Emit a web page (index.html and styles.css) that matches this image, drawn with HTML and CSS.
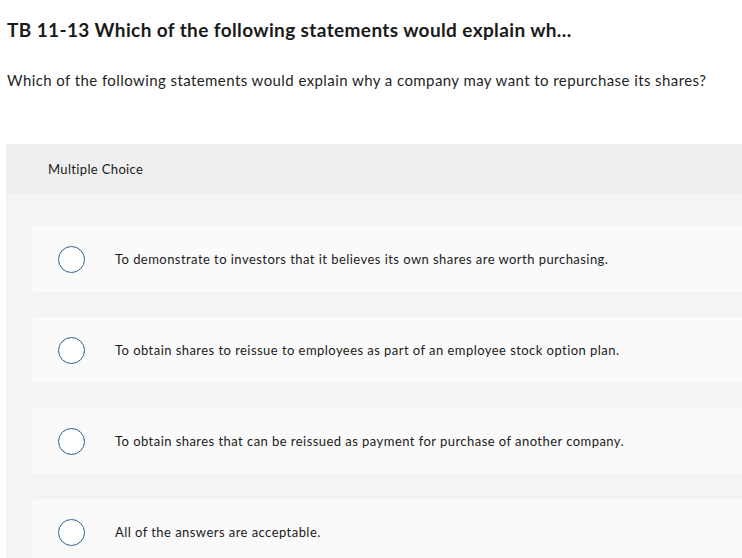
FILE: index.html
```html
<!DOCTYPE html>
<html>
<head>
<meta charset="utf-8">
<link rel="stylesheet" href="styles.css">
</head>
<body>
<h1 class="title">TB 11-13 Which of the following statements would explain wh...</h1>
<p class="question">Which of the following statements would explain why a company may want to repurchase its shares?</p>
<section class="panel">
  <div class="panel-head">Multiple Choice</div>
  <div class="options">
    <label class="option"><span class="radio"></span><span class="opt-text">To demonstrate to investors that it believes its own shares are worth purchasing.</span></label>
    <label class="option"><span class="radio"></span><span class="opt-text">To obtain shares to reissue to employees as part of an employee stock option plan.</span></label>
    <label class="option"><span class="radio"></span><span class="opt-text">To obtain shares that can be reissued as payment for purchase of another company.</span></label>
    <label class="option"><span class="radio"></span><span class="opt-text">All of the answers are acceptable.</span></label>
  </div>
</section>
</body>
</html>
```
FILE: styles.css
```css
html, body {
  margin: 0;
  padding: 0;
  background: #ffffff;
  overflow: hidden;
}
body {
  font-family: "Lato", "Liberation Sans", sans-serif;
  color: #1b1b1b;
  width: 742px;
  height: 558px;
}
.title {
  margin: 0;
  padding: 18px 0 0 7px;
  font-size: 19px;
  line-height: 24px;
  font-weight: 700;
  letter-spacing: 0.38px;
  color: #1a1a1a;
}
.question {
  margin: 0;
  padding: 28px 0 0 7px;
  font-size: 15px;
  line-height: 20px;
  letter-spacing: 0.42px;
  color: #1f1f1f;
}
.panel {
  margin: 54px 0 0 6px;
  background: #f4f4f4;
}
.panel-head {
  height: 50px;
  box-sizing: border-box;
  padding: 17px 0 0 42px;
  background: #efefef;
  font-size: 13px;
  line-height: 16px;
  letter-spacing: 0.35px;
}
.options {
  display: flex;
  flex-direction: column;
  gap: 25px;
  padding: 32px 0 40px 26px;
}
.option {
  display: flex;
  align-items: center;
  height: 66px;
  background: #fafafa;
  border-radius: 3px 0 0 3px;
  padding-left: 26px;
}
.radio {
  width: 25px;
  height: 25px;
  border: 1.5px solid #2d5f8e;
  border-radius: 50%;
  background: #ffffff;
  flex: none;
}
.opt-text {
  margin-left: 30px;
  font-size: 13px;
  line-height: 16px;
  letter-spacing: 0.45px;
}
```
